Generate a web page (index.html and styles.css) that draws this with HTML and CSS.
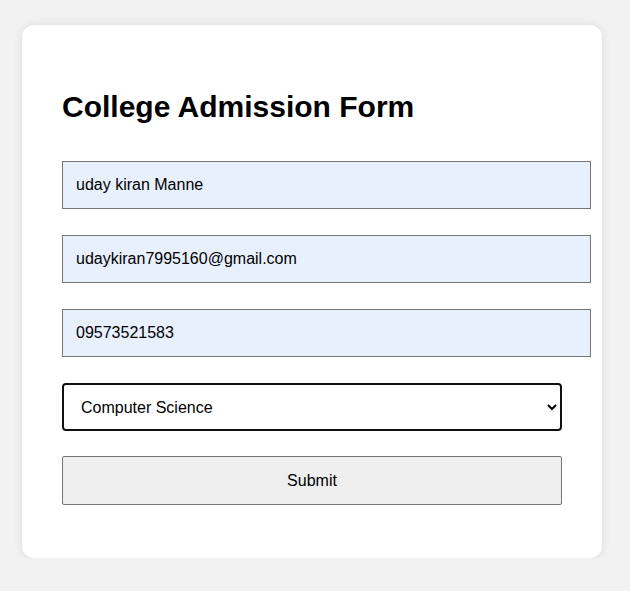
FILE: index.html
```html
<!DOCTYPE html>
<html>
<head>
<meta charset="utf-8">
<link rel="stylesheet" href="styles.css">
</head>
<body>
<div class="page">
  <div class="card">
    <h2 class="title">College Admission Form</h2>
    <form class="form">
      <input class="field" type="text" value="uday kiran Manne">
      <input class="field" type="email" value="udaykiran7995160@gmail.com">
      <input class="field" type="tel" value="09573521583">
      <select class="choice">
        <option>Computer Science</option>
      </select>
      <button class="submit" type="button">Submit</button>
    </form>
  </div>
</div>
</body>
</html>
```

FILE: styles.css
```css
body {
  margin: 0;
  background: #f2f2f2;
  font-family: "Liberation Sans", Arial, sans-serif;
}
.page {
  padding: 25px 0 0 22px;
}
.card {
  width: 500px;
  padding: 40px 40px 53px;
  background: #fff;
  border-radius: 12px;
  box-shadow: 0 0 10px rgba(0, 0, 0, 0.1);
}
.title {
  margin: 25px 0 37px;
  font-size: 30px;
  font-weight: bold;
  color: #000;
}
.form {
  display: flex;
  flex-direction: column;
  align-items: flex-start;
  gap: 26px;
}
.field {
  box-sizing: border-box;
  width: 529px;
  height: 48px;
  padding: 0 13px;
  border: 1px solid #767676;
  background: #e8f0fe;
  font-family: "Liberation Sans", Arial, sans-serif;
  font-size: 16px;
  color: #000;
}
.choice {
  box-sizing: border-box;
  width: 500px;
  height: 48px;
  padding: 0 13px;
  border: 2px solid #101010;
  border-radius: 4px;
  background: #fff;
  font-family: "Liberation Sans", Arial, sans-serif;
  font-size: 16px;
  color: #000;
}
.submit {
  box-sizing: border-box;
  width: 500px;
  height: 49px;
  margin-top: -1px;
  border: 1px solid #767676;
  border-radius: 2px;
  background: #efefef;
  font-family: "Liberation Sans", Arial, sans-serif;
  font-size: 16px;
  color: #000;
}
```
